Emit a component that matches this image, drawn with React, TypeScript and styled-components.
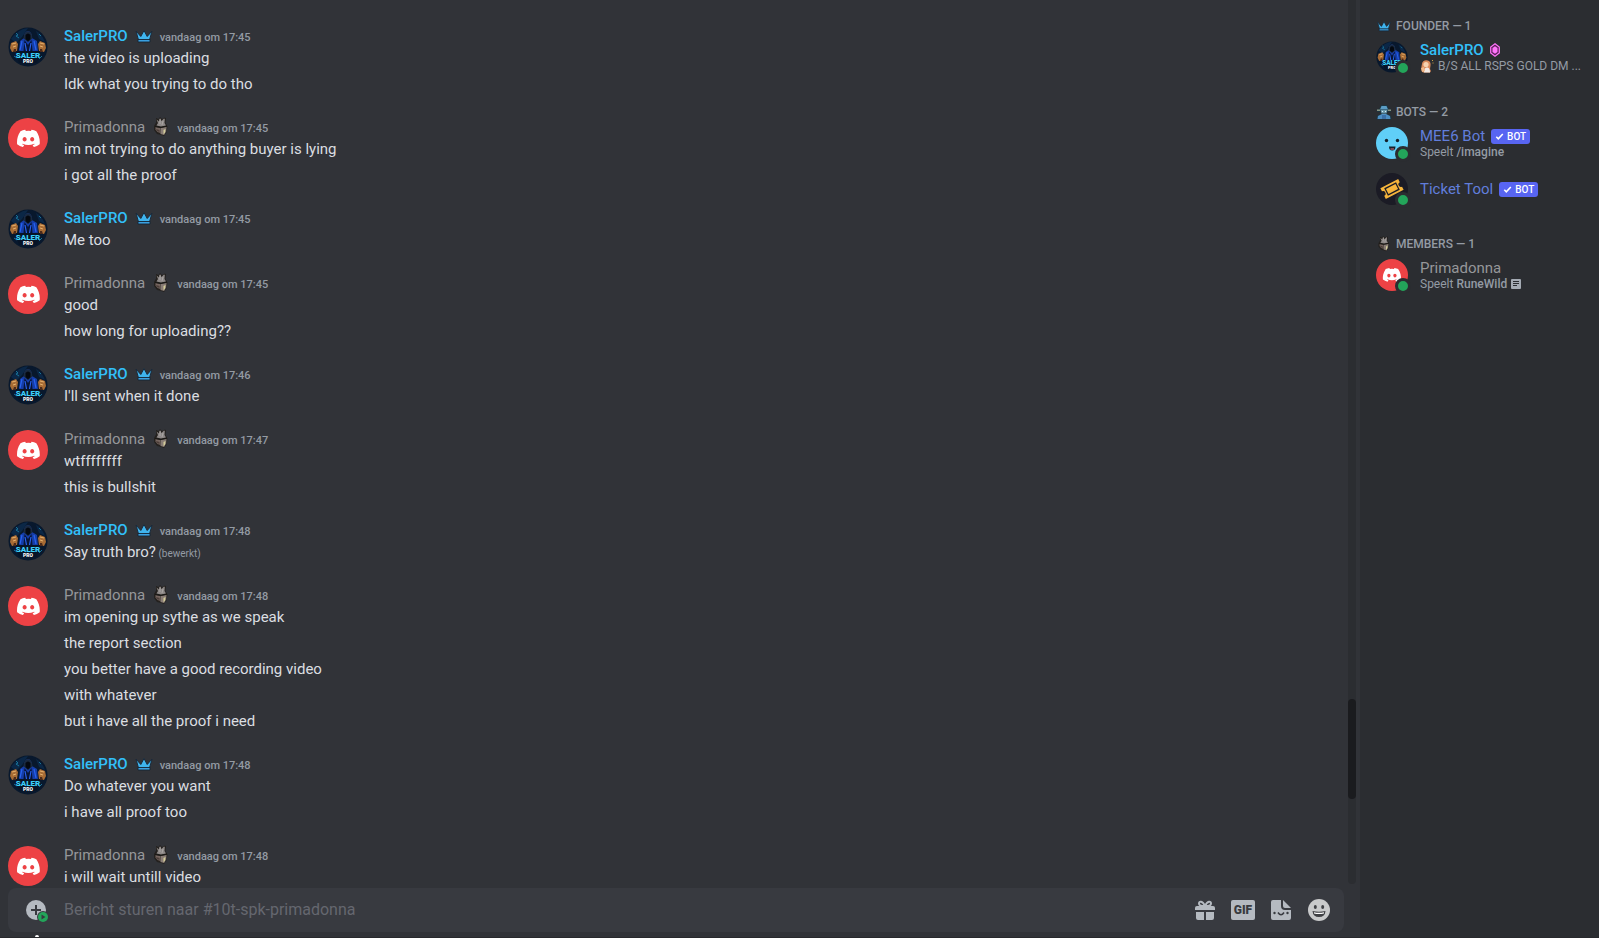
import React from 'react';
import styled, { createGlobalStyle } from 'styled-components';
import { FaDiscord } from 'react-icons/fa';

const Global = createGlobalStyle`
  *, *::before, *::after { box-sizing: border-box; }
  body { margin: 0; background: #313338; font-family: Roboto, "Noto Sans", sans-serif; }
  h2, h3, p, ol, ul { margin: 0; padding: 0; font-weight: 400; list-style: none; }
  button { border: 0; padding: 0; background: none; cursor: pointer; font-family: inherit; }
  svg { display: block; }
`;

const Shell = styled.div`
  display: flex;
  height: 100vh;
  overflow: hidden;
  border-bottom: 1px solid #28292d;
`;
const Chat = styled.main`
  flex: 1;
  min-width: 0;
  display: flex;
  flex-direction: column;
`;
const Scroller = styled.div`
  flex: 1;
  min-height: 0;
  display: flex;
  padding-left: 8px;
`;
const Messages = styled.ol`
  flex: 1;
  min-width: 0;
  display: flex;
  flex-direction: column;
  justify-content: flex-end;
  gap: 21px;
  overflow: hidden;
`;
const Track = styled.div`
  width: 8px;
  margin: 0 4px 4px 0;
  display: flex;
  flex-direction: column;
  background: #2b2d31;
  border-radius: 0 0 4px 4px;
`;
const TrackSpace = styled.div<{ $part: number }>`
  flex: ${(p) => p.$part} 0 0;
`;
const Thumb = styled.div`
  height: 100px;
  border-radius: 4px;
  background: #1a1b1e;
`;

const Group = styled.li`
  display: flex;
  flex-shrink: 0;
  align-items: flex-start;
  gap: 16px;
`;
const AvatarFrame = styled.div<{ $size: number }>`
  position: relative;
  flex: none;
  width: ${(p) => p.$size}px;
  height: ${(p) => p.$size}px;
  margin-top: ${(p) => (p.$size === 40 ? 2 : 0)}px;
`;
const DiscordDisc = styled.div`
  width: 100%;
  height: 100%;
  display: grid;
  place-items: center;
  border-radius: 50%;
  background: #ed4245;
  color: #fff;
  svg { width: 62%; height: 62%; }
`;
const Online = styled.span`
  position: absolute;
  right: -3px;
  bottom: -3px;
  width: 16px;
  height: 16px;
  border: 3px solid #2b2d31;
  border-radius: 50%;
  background: #23a55a;
`;
const Body = styled.div`
  display: flex;
  flex-direction: column;
  gap: 4px;
  font-size: 15px;
  line-height: 22px;
  color: #dbdee1;
`;
const Intro = styled.div``;
const Header = styled.h3`
  display: flex;
  align-items: baseline;
  gap: 6px;
  height: 22px;
  font-size: 15px;
  line-height: 22px;
`;
const Name = styled.span<{ $color: string; $strong?: boolean }>`
  color: ${(p) => p.$color};
  font-weight: ${(p) => (p.$strong ? 500 : 400)};
`;
const RoleIcon = styled.span`
  align-self: center;
  width: 20px;
  height: 20px;
`;
const Time = styled.time`
  font-size: 11px;
  font-weight: 500;
  color: #949ba4;
`;
const Edited = styled.span`
  font-size: 10px;
  line-height: 10px;
  color: #949ba4;
`;

const Composer = styled.form`
  position: relative;
  display: flex;
  align-items: center;
  height: 44px;
  margin: 0 16px 5px 8px;
  padding: 0 13px 0 16px;
  border-radius: 8px;
  background: #383a40;
`;
const Attach = styled.button`
  width: 26px;
  height: 24px;
  margin-right: 14px;
`;
const Entry = styled.input`
  flex: 1;
  min-width: 0;
  height: 44px;
  padding: 0 0 2px;
  border: 0;
  outline: 0;
  background: none;
  color: #dbdee1;
  font-family: inherit;
  font-size: 16px;
  &::placeholder { color: #65676f; opacity: 1; }
`;
const Tools = styled.div`
  display: flex;
  align-items: center;
  gap: 14px;
`;
const Tool = styled.button`
  width: 24px;
  height: 24px;
`;
const Pointer = styled.span`
  position: absolute;
  left: 27px;
  bottom: -5px;
  width: 4px;
  height: 2px;
  border-radius: 2px 2px 0 0;
  background: #fff;
`;

const Sidebar = styled.aside`
  flex: none;
  width: 239px;
  padding: 0 16px;
  background: #2b2d31;
`;
const Section = styled.section`
  padding-top: 24px;
  &:first-child { padding-top: 18px; }
`;
const SectionTitle = styled.h2`
  display: flex;
  align-items: center;
  gap: 4px;
  height: 16px;
  font-size: 12px;
  line-height: 16px;
  font-weight: 500;
  color: #949ba4;
  svg { width: 16px; height: 16px; }
`;
const Member = styled.li`
  display: flex;
  align-items: center;
  gap: 12px;
  height: 44px;
  margin: 1px 0 2px;
  &:last-child { margin-bottom: 1px; }
`;
const MemberText = styled.div`
  min-width: 0;
  flex: 1;
`;
const MemberName = styled.div`
  display: flex;
  align-items: center;
  gap: 6px;
  height: 20px;
  font-size: 15px;
  line-height: 20px;
`;
const Activity = styled.div`
  display: flex;
  align-items: center;
  gap: 4px;
  height: 14px;
  overflow: hidden;
  white-space: nowrap;
  font-size: 12px;
  line-height: 12px;
  padding-bottom: 2px;
  color: #949ba4;
  b { font-weight: 500; }
`;
const BotTag = styled.span`
  display: flex;
  align-items: center;
  gap: 3px;
  height: 15px;
  padding: 0 4px;
  border-radius: 3px;
  background: #5865f2;
  color: #fff;
  font-size: 10px;
  line-height: 15px;
  font-weight: 500;
`;

const Crown = () => (
  <svg viewBox="0 0 20 20" aria-hidden="true">
    <path d="M2 5l4.800 5.500L10 4.500l3.200 6L18 5l-2.500 9h-11z" fill="#3fb4ee" stroke="#1b2a3a" strokeWidth="1" />
    <path d="M4 13.500h12V16H4z" fill="#3aa0e0" stroke="#152433" strokeWidth=".9" />
  </svg>
);
const Helm = () => (
  <svg viewBox="0 0 20 20" aria-hidden="true">
    <path d="M5 1l2.500 1L9 0l2 2 3-1.500 1 1-.5 4.500 2 3.500-1 6-2.500 3.500-3-1-4-1-3-4 0-4 2-3.500z" fill="#24211e" />
    <path d="M5.500 2.500l2.500 2L9 1l1.500 3L13 1.500l.8.500-.3 4L15 8.500l-5 1-4.500-1L7 6z" fill="#8d8887" />
    <path d="M9 2v5M12 4l-1 4" stroke="#b3aeac" strokeWidth=".8" />
    <path d="M4.500 10l4.500 1 .5 5-3-1-2-2.500z" fill="#75655f" />
    <path d="M9.500 11l6-1-.4 4.500-2 3.500-3.600-1z" fill="#887c75" />
    <path d="M5 12l3.500 1v2l-2.500-1z" fill="#4c3e39" />
    <path d="M12.500 13l2-1-.5 3.500-1.500 2z" fill="#d3cd9a" />
    <path d="M4 9.500l6 1L16 9" stroke="#171513" strokeWidth=".8" fill="none" />
  </svg>
);
const Robot = () => (
  <svg viewBox="0 0 16 16" aria-hidden="true">
    <path d="M5 1h6l2 4h2v3h-3l-1 2 4 1.500.5 4H.5l.5-4L5 10 4 8H1V5h2z" fill="#1c3440" />
    <path d="M5.500 2h5L12 5.500H4z" fill="#5b9cc4" />
    <path d="M4.500 6h7l-1 3.500h-5z" fill="#6c9aae" />
    <path d="M2 12l4-2h4l4 2 .5 3h-13z" fill="#4d8fc4" />
    <path d="M6 11h4v4H6z" fill="#3a70a8" />
    <path d="M1 5.500h3V7H1zM12 5.500h3V7h-3z" fill="#8a9684" />
    <path d="M6 7h1v1H6zM9 7h1v1H9z" fill="#d6ecf5" />
  </svg>
);
const Gem = () => (
  <svg width="10" height="14" viewBox="0 0 10 14" aria-hidden="true">
    <path d="M5 .8L9.300 4v6L5 13.200.7 10V4z" fill="#5b2159" stroke="#ff73fa" strokeWidth="1.200" />
    <path d="M5 3.200L7.500 5v4L5 10.800 2.500 9V5z" fill="#ff73fa" />
  </svg>
);
const Person = () => (
  <svg width="14" height="14" viewBox="0 0 14 14" aria-hidden="true">
    <path d="M2 5c0-5 8-5 8.500-.5C11 8 9 9 11 12l-1 1.500H3c-2-1-2-5-1-8.500z" fill="#d98a5c" />
    <circle cx="6" cy="5.500" r="2.600" fill="#f5d2b0" />
    <path d="M4 13.500c0-4 1.500-5 3-5s3 1 3 5z" fill="#f2e9e4" />
    <path d="M1 9l3-1 1 4-3 1z" fill="#f0b98a" />
    <path d="M12 1l1 1M12.500 4h1" stroke="#c8a24a" />
  </svg>
);
const Note = () => (
  <svg width="10" height="10" viewBox="0 0 10 10" aria-hidden="true">
    <rect width="10" height="10" rx="1" fill="#a4aab3" />
    <path d="M2 2.500h6M2 4.500h6M2 6.500h4" stroke="#2b2d31" />
  </svg>
);
const Tick = () => (
  <svg width="9" height="9" viewBox="0 0 9 9" aria-hidden="true">
    <path d="M1.300 4.800l2 2L7.800 2" fill="none" stroke="#fff" strokeWidth="1.600" />
  </svg>
);

const SalerFace = () => (
  <svg viewBox="0 0 40 40" role="img" aria-label="SalerPRO">
    <circle cx="20" cy="20" r="19.500" fill="#08182d" />
    <path d="M3 12Q10 2 20 1l-6 9-6 6zM28 4q6 3 9 11l-6-3z" fill="#0b2746" />
    <path d="M8 6l2 2-2 1 3 2M31 7l2 2M6 29l3 2M31 32l3-3" stroke="#17739a" fill="none" />
    <path d="M16 11q0-6 4-7 4 1 4 7l5 3 1 11H11l1-11z" fill="#153da8" />
    <path d="M15.500 11.500Q16 4.500 20 4q4 .5 4.500 7.500L20 15z" fill="#1a2a40" />
    <path d="M17.500 8q2.500-3 5 0v4L20 14.500 17.500 12z" fill="#04080f" />
    <path d="M16.500 13l3.500 5 3.500-5 1 11h-9z" fill="#081536" />
    <path d="M14 14l-2 9M26 14l2 9M17 16l1.500 8M23 16l-1.500 8" stroke="#2862ee" strokeWidth="1.200" />
    <path d="M3 16l5-2 2 3-1 7-5 1-2-4zM37 16l-5-2-2 3 1 7 5 1 2-4z" fill="#a86c35" />
    <path d="M4 17l4-1M5 20l3-1M36 17l-4-1M35 20l-3-1" stroke="#e5b06b" />
    <path d="M6 22h2v3H5zM34 22h-2v3h3z" fill="#4a2a1b" />
    <path d="M8 24h24l-3 12H11z" fill="#071426" />
    <text x="20" y="30.500" textAnchor="middle" fontFamily="Roboto, sans-serif" fontSize="8" fontWeight="900" fill="#3ccffa">SALER</text>
    <text x="20" y="35.500" textAnchor="middle" fontFamily="Roboto, sans-serif" fontSize="5" fontWeight="900" fill="#fff">PRO</text>
  </svg>
);
const Mee6Face = () => (
  <svg viewBox="0 0 32 32" role="img" aria-label="MEE6 Bot">
    <circle cx="16" cy="16" r="16" fill="#60cff8" />
    <circle cx="10.500" cy="13.500" r="1.700" fill="#14202b" />
    <circle cx="21.500" cy="13.500" r="1.700" fill="#14202b" />
    <path d="M13 19.500h6.500q0 4-3.200 4-3.300 0-3.300-4z" fill="#14202b" />
    <path d="M14.500 22h3.500" stroke="#e8707c" />
  </svg>
);
const TicketFace = () => (
  <svg viewBox="0 0 32 32" role="img" aria-label="Ticket Tool">
    <circle cx="16" cy="16" r="16" fill="#1b1b25" />
    <g transform="rotate(-27 16 16)">
      <path d="M6 10h20v3.500a2.500 2.500 0 0 0 0 5V22H6v-3.500a2.500 2.500 0 0 0 0-5z" fill="#f6b53c" />
      <rect x="10" y="12.500" width="12" height="7" fill="none" stroke="#1b1b25" strokeWidth="1.300" />
    </g>
  </svg>
);

type Face = 'saler' | 'discord' | 'mee6' | 'ticket';
const faces: Record<Face, React.ReactNode> = {
  saler: <SalerFace />,
  discord: <DiscordDisc><FaDiscord /></DiscordDisc>,
  mee6: <Mee6Face />,
  ticket: <TicketFace />,
};
const Avatar = ({ face, size, online }: { face: Face; size: number; online?: boolean }) => (
  <AvatarFrame $size={size}>
    {faces[face]}
    {online && <Online />}
  </AvatarFrame>
);

type Post = { by: 's' | 'p'; at: string; lines: string[]; edited?: boolean };
const posts: Post[] = [
  { by: 's', at: '17:45', lines: ['the video is uploading', 'Idk what you trying to do tho'] },
  { by: 'p', at: '17:45', lines: ['im not trying to do anything buyer is lying', 'i got all the proof'] },
  { by: 's', at: '17:45', lines: ['Me too'] },
  { by: 'p', at: '17:45', lines: ['good', 'how long for uploading??'] },
  { by: 's', at: '17:46', lines: ["I'll sent when it done"] },
  { by: 'p', at: '17:47', lines: ['wtffffffff', 'this is bullshit'] },
  { by: 's', at: '17:48', lines: ['Say truth bro?'], edited: true },
  {
    by: 'p',
    at: '17:48',
    lines: [
      'im opening up sythe as we speak',
      'the report section',
      'you better have a good recording video',
      'with whatever',
      'but i have all the proof i need',
    ],
  },
  { by: 's', at: '17:48', lines: ['Do whatever you want', 'i have all proof too'] },
  { by: 'p', at: '17:48', lines: ['i will wait untill video'] },
];
const authors = {
  s: { name: 'SalerPRO', color: '#32c0fa', strong: true, face: 'saler' as Face, icon: <Crown /> },
  p: { name: 'Primadonna', color: '#96979a', strong: false, face: 'discord' as Face, icon: <Helm /> },
};

const PostGroup = ({ post }: { post: Post }) => {
  const author = authors[post.by];
  const [first, ...rest] = post.lines;
  return (
    <Group>
      <Avatar face={author.face} size={40} />
      <Body>
        <Intro>
          <Header>
            <Name $color={author.color} $strong={author.strong}>{author.name}</Name>
            <RoleIcon>{author.icon}</RoleIcon>
            <Time>vandaag om {post.at}</Time>
          </Header>
          <p>{first}{post.edited && <Edited> (bewerkt)</Edited>}</p>
        </Intro>
        {rest.map((line) => <p key={line}>{line}</p>)}
      </Body>
    </Group>
  );
};

const Verified = () => <BotTag><Tick />BOT</BotTag>;

export default function App() {
  return (
    <>
      <Global />
      <Shell>
        <Chat>
          <Scroller>
            <Messages>
              {posts.map((post, i) => <PostGroup key={i} post={post} />)}
            </Messages>
            <Track>
              <TrackSpace $part={699} />
              <Thumb />
              <TrackSpace $part={85} />
            </Track>
          </Scroller>
          <Composer onSubmit={(e) => e.preventDefault()}>
            <Attach type="button" aria-label="Bijlage toevoegen">
              <svg width="26" height="24" viewBox="0 0 26 24">
                <circle cx="12" cy="12" r="10" fill="#b5bac1" />
                <path d="M12 7v10M7 12h10" stroke="#383a40" strokeWidth="2" />
                <circle cx="19" cy="19" r="6" fill="#383a40" />
                <circle cx="19" cy="19" r="5" fill="#23a55a" />
                <path d="M17.500 16.500l4 2.500-4 2.500z" fill="#383a40" />
              </svg>
            </Attach>
            <Entry type="text" aria-label="Bericht" placeholder="Bericht sturen naar #10t-spk-primadonna" />
            <Tools>
              <Tool type="button" aria-label="Cadeau">
                <svg viewBox="0 0 24 24" fill="#b5bac1">
                  <path d="M3 14h8v8H5a2 2 0 0 1-2-2zM13 14h8v6a2 2 0 0 1-2 2h-6z" />
                  <path d="M4 8h16a2 2 0 0 1 2 2v2H2v-2a2 2 0 0 1 2-2z" />
                  <path d="M11 8C9 8 6 8 6 5.500S9.500 2.500 12 8c2.500-5.500 6-5 6-2.500S15 8 13 8" fill="none" stroke="#b5bac1" strokeWidth="2" />
                </svg>
              </Tool>
              <Tool type="button" aria-label="GIF">
                <svg viewBox="0 0 24 24">
                  <rect y="2" width="24" height="20" rx="2" fill="#b5bac1" />
                  <text x="12" y="16" textAnchor="middle" fontFamily="Roboto, sans-serif" fontSize="12" fontWeight="900" fill="#383a40">GIF</text>
                </svg>
              </Tool>
              <Tool type="button" aria-label="Sticker">
                <svg viewBox="0 0 24 24">
                  <path d="M4 2h8v6a4 4 0 0 0 4 4h6v8a2 2 0 0 1-2 2H4a2 2 0 0 1-2-2V4a2 2 0 0 1 2-2z" fill="#b5bac1" />
                  <path d="M14 2l8 8h-6a2 2 0 0 1-2-2z" fill="#b5bac1" />
                  <path d="M9 14.500q3 4.500 6 0" fill="none" stroke="#383a40" strokeWidth="1.600" />
                  <circle cx="5.500" cy="15" r="1.200" fill="#383a40" />
                  <circle cx="18.500" cy="15" r="1.200" fill="#383a40" />
                </svg>
              </Tool>
              <Tool type="button" aria-label="Emoji">
                <svg viewBox="0 0 24 24">
                  <circle cx="12" cy="12" r="11" fill="#c9cacb" />
                  <ellipse cx="8.300" cy="9" rx="1.500" ry="2" fill="#3f4044" />
                  <ellipse cx="15.700" cy="9" rx="1.500" ry="2" fill="#3f4044" />
                  <path d="M5.500 13q6.500 1.500 13 0-.5 6-6.500 6t-6.500-6z" fill="#3f4044" />
                  <path d="M7 14.300q5 1 10 0v1.200q-5 1.200-10 0z" fill="#fff" />
                </svg>
              </Tool>
            </Tools>
            <Pointer />
          </Composer>
        </Chat>
        <Sidebar>
          <Section>
            <SectionTitle><Crown />FOUNDER — 1</SectionTitle>
            <ul>
              <Member>
                <Avatar face="saler" size={32} online />
                <MemberText>
                  <MemberName><Name $color="#32c0fa" $strong>SalerPRO</Name><Gem /></MemberName>
                  <Activity><Person />B/S ALL RSPS GOLD DM ...</Activity>
                </MemberText>
              </Member>
            </ul>
          </Section>
          <Section>
            <SectionTitle><Robot />BOTS — 2</SectionTitle>
            <ul>
              <Member>
                <Avatar face="mee6" size={32} online />
                <MemberText>
                  <MemberName><Name $color="#617edb">MEE6 Bot</Name><Verified /></MemberName>
                  <Activity><span>Speelt <b>/imagine</b></span></Activity>
                </MemberText>
              </Member>
              <Member>
                <Avatar face="ticket" size={32} online />
                <MemberText>
                  <MemberName><Name $color="#617edb">Ticket Tool</Name><Verified /></MemberName>
                </MemberText>
              </Member>
            </ul>
          </Section>
          <Section>
            <SectionTitle><Helm />MEMBERS — 1</SectionTitle>
            <ul>
              <Member>
                <Avatar face="discord" size={32} online />
                <MemberText>
                  <MemberName><Name $color="#96979a">Primadonna</Name></MemberName>
                  <Activity><span>Speelt <b>RuneWild</b></span><Note /></Activity>
                </MemberText>
              </Member>
            </ul>
          </Section>
        </Sidebar>
      </Shell>
    </>
  );
}
